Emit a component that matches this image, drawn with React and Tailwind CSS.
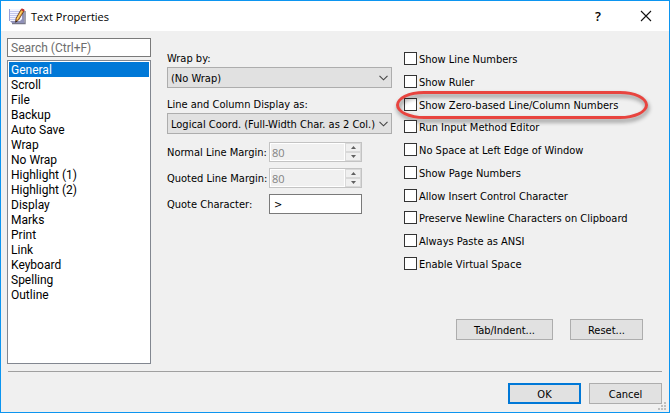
import React from "react";

const SECTIONS = [
  "General", "Scroll", "File", "Backup", "Auto Save", "Wrap", "No Wrap", "Highlight (1)",
  "Highlight (2)", "Display", "Marks", "Print", "Link", "Keyboard", "Spelling", "Outline",
];

const OPTIONS = [
  "Show Line Numbers", "Show Ruler", "Show Zero-based Line/Column Numbers", "Run Input Method Editor",
  "No Space at Left Edge of Window", "Show Page Numbers", "Allow Insert Control Character",
  "Preserve Newline Characters on Clipboard", "Always Paste as ANSI", "Enable Virtual Space",
];

function NotepadIcon() {
  return (
    <svg width="17" height="17" viewBox="0 0 17 17" aria-hidden="true">
      <path d="M3 15.5h13V3" fill="none" stroke="#777789" strokeWidth="1.4" />
      <path d="M1 1h14v14H3l-2-2z" fill="#8f90b8" />
      <path d="M1 1h12v10l-2 2H1z" fill="#f4f5ff" />
      <path d="M1 3.5h10M1 5.5h9M1 7.5h8M1 9.5h7M1 11.5h6" stroke="#c3c7ee" />
      <path d="M.5 1v12" stroke="#9aa0d8" />
      <path d="M12 1.5l3 1.5-5.5 9-2.8 2.2.3-3.7z" fill="#e8a33a" stroke="#5a3420" strokeWidth=".8" />
      <path d="M12 1.7l.8-1.4 3 1.6-.9 1.6z" fill="#c8322c" />
      <path d="M12.6 3.5L8.2 11" stroke="#ffe27a" />
      <path d="M6.5 14.6l.2-2.3 1.7 1z" fill="#222" />
    </svg>
  );
}

function Dropdown({ id, label, value }) {
  return (
    <div className="flex flex-col gap-px">
      <label htmlFor={id} className="h-4 pt-px">{label}</label>
      <div className="relative">
        <select id={id} className="block h-[21px] w-full appearance-none border border-[#adadad] bg-[#e1e1e1] pt-0.5 pr-3.5 pl-[3px]">
          <option>{value}</option>
        </select>
        <svg className="pointer-events-none absolute top-2 right-1" width="9" height="6" viewBox="0 0 9 6" aria-hidden="true">
          <path d="M.5.8l4 4 4-4" fill="none" stroke="#444" strokeWidth="1.1" />
        </svg>
      </div>
    </div>
  );
}

function SpinButton({ label, d }) {
  return (
    <button type="button" disabled aria-label={label} className="flex flex-1 items-center justify-center border border-[#d9d9d9] bg-[#f0f0f0]">
      <svg width="5" height="3" viewBox="0 0 5 3" aria-hidden="true"><path d={d} fill="#606060" /></svg>
    </button>
  );
}

function Margin({ id, label }) {
  return (
    <div className="flex items-center">
      <label htmlFor={id} className="w-[102px] pt-px whitespace-nowrap">{label}</label>
      <div className="flex h-5 w-[93px] border border-[#c3c3c3] bg-[#f0f0f0]">
        <input
          id={id}
          type="number"
          disabled
          defaultValue={80}
          className="min-w-0 flex-1 border border-white bg-[#f0f0f0] pl-px font-['Open_Sans',sans-serif] text-[11px] text-[#838383] [appearance:textfield]"
        />
        <div className="flex w-4 flex-col">
          <SpinButton label="Increase" d="M0 3L2.5 0 5 3z" />
          <SpinButton label="Decrease" d="M0 0L2.5 3 5 0z" />
        </div>
      </div>
    </div>
  );
}

function Option({ label, marked }) {
  return (
    <div className="relative flex h-[13px]">
      <label className="flex items-center gap-0.5 whitespace-nowrap">
        <input type="checkbox" className="size-[13px] appearance-none border border-[#333] bg-white checked:bg-[#0078d7]" />
        <span className="pt-0.5">{label}</span>
      </label>
      {marked && (
        <div className="pointer-events-none absolute -top-[7px] -left-2 h-7 w-[252px] rounded-[28px/14px] border-3 border-[#e8443f] drop-shadow-[1px_3px_2px_rgba(0,0,0,0.45)]" />
      )}
    </div>
  );
}

function PushButton({ children, primary, wide }) {
  return (
    <button
      type="button"
      className={`h-[21px] bg-[#e1e1e1] pt-0.5 ${wide ? "w-[97px]" : "w-[73px]"} ${primary ? "border-2 border-[#0078d7]" : "border border-[#adadad]"}`}
    >
      {children}
    </button>
  );
}

export default function App() {
  return (
    <div className="flex min-h-screen flex-col border border-[#0c95f0] bg-[#f0f0f0] font-['DejaVu_Sans_Condensed','DejaVu_Sans',sans-serif] text-[11px] leading-[15px] text-black">
      <header className="flex h-[30px] items-center bg-white pr-[17px] pl-2 font-['Open_Sans',sans-serif]">
        <NotepadIcon />
        <h1 className="ml-[5px] flex-1">Text Properties</h1>
        <button type="button" aria-label="Help" className="mr-9 w-3 text-[13px] font-semibold">?</button>
        <button type="button" aria-label="Close">
          <svg width="12" height="12" viewBox="0 0 12 12" aria-hidden="true">
            <path d="M1 1l10 10M11 1L1 11" stroke="#111" strokeWidth="1.1" />
          </svg>
        </button>
      </header>

      <div className="flex flex-1 flex-col pt-[7px] pr-[7px] pb-2 pl-1.5">
        <main className="flex flex-1 gap-3">
          <nav className="mr-1 flex w-36 flex-col gap-[3px] font-[Roboto,sans-serif] text-[12px]">
            <input aria-label="Search" placeholder="Search (Ctrl+F)" className="h-[19px] w-full border border-[#7a7a7a] bg-white px-[3px] pt-px placeholder:text-[#6d6d6d]" />
            <ul className="flex-1 border border-[#828790] bg-white p-px">
              {SECTIONS.map((name, i) => (
                <li key={name}>
                  <button type="button" className={`block h-[15px] w-full px-0.5 text-left leading-4 ${i === 0 ? "bg-[#0078d7] text-white" : ""}`}>
                    {name}
                  </button>
                </li>
              ))}
            </ul>
          </nav>

          <section className="flex w-[225px] flex-col gap-2 pt-3">
            <Dropdown id="wrap" label="Wrap by:" value="(No Wrap)" />
            <Dropdown id="coord" label="Line and Column Display as:" value="Logical Coord. (Full-Width Char. as 2 Col.)" />
            <div className="flex flex-col gap-1.5">
              <Margin id="normal" label="Normal Line Margin:" />
              <Margin id="quoted" label="Quoted Line Margin:" />
              <div className="flex items-center">
                <label htmlFor="quote" className="w-[102px] pt-px whitespace-nowrap">Quote Character:</label>
                <input id="quote" defaultValue=">" className="h-5 w-[93px] border border-[#7a7a7a] bg-white px-1" />
              </div>
            </div>
          </section>

          <section className="flex flex-1 flex-col pt-3.5">
            <div className="flex h-[218px] flex-col justify-between">
              {OPTIONS.map((label, i) => (
                <Option key={label} label={label} marked={i === 2} />
              ))}
            </div>
            <div className="mt-auto flex justify-end gap-[17px] pr-[19px] pb-6">
              <PushButton wide>Tab/Indent...</PushButton>
              <PushButton>Reset...</PushButton>
            </div>
          </section>
        </main>
        <hr className="mt-[7px] ml-px border-t border-[#a0a0a0]" />
        <footer className="relative mt-[11px] flex justify-end gap-2">
          <PushButton primary>OK</PushButton>
          <PushButton>Cancel</PushButton>
          <svg className="absolute -right-1 -bottom-1.5" width="8" height="8" viewBox="0 0 8 8" fill="#bfbfbf" aria-hidden="true">
            <path d="M6 0h2v2H6zM3 3h2v2H3zM6 3h2v2H6zM0 6h2v2H0zM3 6h2v2H3zM6 6h2v2H6z" />
          </svg>
        </footer>
      </div>
    </div>
  );
}
